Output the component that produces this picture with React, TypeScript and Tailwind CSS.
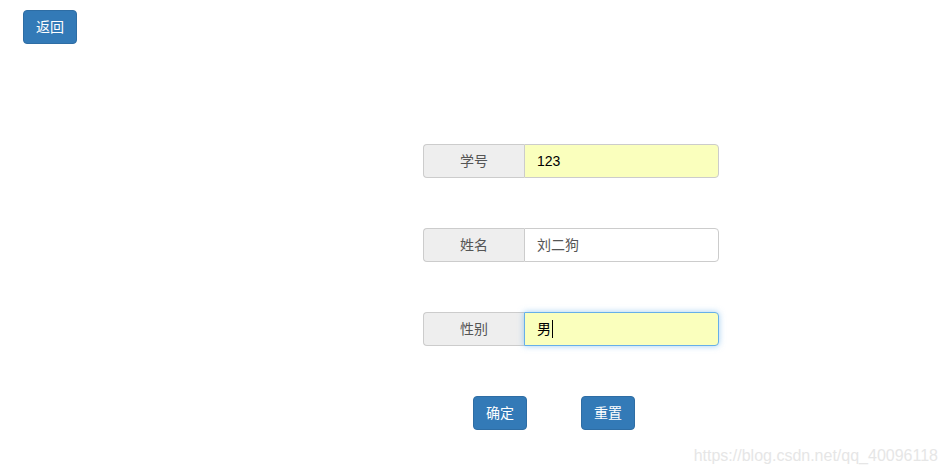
const font = { fontFamily: '"Liberation Sans", "Noto Sans CJK SC", sans-serif' };

function Row({ label, value, filled, focused, caret }: { label: string; value: string; filled?: boolean; focused?: boolean; caret?: boolean }) {
  return (
    <div className="flex h-[34px] w-[296px]">
      <div className="flex w-[101px] items-center justify-center rounded-l-[4px] border border-r-0 border-[#cccccc] bg-[#eeeeee] text-[14px] text-[#555555]">
        {label}
      </div>
      <div
        className={
          'flex flex-1 items-center rounded-r-[4px] border px-[12px] text-[14px] ' +
          (filled ? 'bg-[#faffbd] text-black ' : 'bg-white text-[#555555] ') +
          (focused ? 'border-[#66afe9] shadow-[0_0_6px_rgba(102,175,233,0.6)]' : 'border-[#cccccc]')
        }
      >
        <span>{value}</span>
        {caret && <span className="ml-px inline-block h-[18px] w-px bg-black" />}
      </div>
    </div>
  );
}

export default function App() {
  return (
    <div className="relative h-[476px] w-[946px] bg-white" style={font}>
      <div className="px-[23px] pt-[10px]">
        <button className="h-[34px] w-[54px] rounded-[4px] border border-[#2e6da4] bg-[#337ab7] text-[14px] text-white">
          返回
        </button>
      </div>
      <div className="ml-[423px] mt-[100px] flex flex-col gap-[50px]">
        <Row label="学号" value="123" filled />
        <Row label="姓名" value="刘二狗" />
        <Row label="性别" value="男" filled focused caret />
        <div className="flex gap-[54px] pl-[50px]">
          <button className="h-[34px] w-[54px] rounded-[4px] border border-[#2e6da4] bg-[#337ab7] text-[14px] text-white">
            确定
          </button>
          <button className="h-[34px] w-[54px] rounded-[4px] border border-[#2e6da4] bg-[#337ab7] text-[14px] text-white">
            重置
          </button>
        </div>
      </div>
      <div className="absolute bottom-[8px] right-[8px] text-[16px] text-[#e6e6e6]">
        https://blog.csdn.net/qq_40096118
      </div>
    </div>
  );
}
